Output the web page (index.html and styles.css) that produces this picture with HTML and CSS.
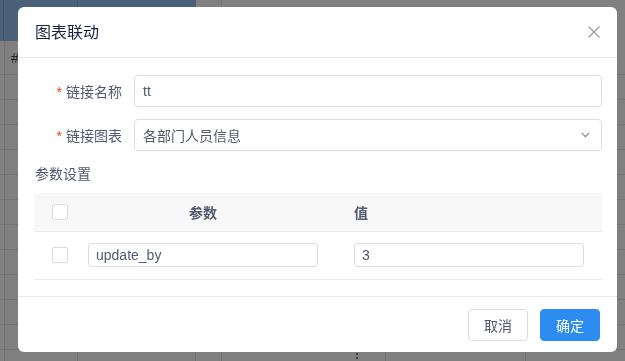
FILE: index.html
```html
<!DOCTYPE html>
<html lang="zh-CN">
<head>
<meta charset="utf-8">
<title>图表联动</title>
<link rel="stylesheet" href="styles.css">
</head>
<body>
<div class="page">
  <div class="topbar">
    <div class="brand"><span class="bcol b1"></span><span class="bcol b2"></span><span class="bcol b3"></span></div>
    <div class="tools"><span class="tcol"></span></div>
  </div>
  <div class="sheet">
    <div class="col c0"></div>
    <div class="col c1"><span class="hash">#</span></div>
    <div class="col c2"></div>
    <div class="col c3"></div>
    <div class="col c4"><span class="dots"></span></div>
    <div class="col c5"></div>
    <div class="col c6"></div>
  </div>
</div>

<div class="modal">
  <div class="modal-header">
    <span class="modal-title">图表联动</span>
    <svg class="close" width="12" height="12" viewBox="0 0 12 12"><path d="M0.5 0.5 L11.5 11.5 M11.5 0.5 L0.5 11.5" stroke="#999" stroke-width="1.2" fill="none"/></svg>
  </div>
  <div class="modal-body">
    <div class="form-item">
      <label class="form-label"><span class="req">*</span><span>链接名称</span></label>
      <div class="input">tt</div>
    </div>
    <div class="form-item">
      <label class="form-label"><span class="req">*</span><span>链接图表</span></label>
      <div class="input select">
        <span>各部门人员信息</span>
        <svg class="arrow" width="9" height="6" viewBox="0 0 9 6"><path d="M0.7 0.8 L4.5 4.6 L8.3 0.8" stroke="#808695" stroke-width="1.2" fill="none"/></svg>
      </div>
    </div>
    <div class="section-title">参数设置</div>
    <div class="table">
      <div class="trow thead">
        <div class="cell ck"><span class="checkbox"></span></div>
        <div class="cell param center">参数</div>
        <div class="cell value">值</div>
      </div>
      <div class="trow tbody">
        <div class="cell ck"><span class="checkbox"></span></div>
        <div class="cell param"><div class="small-input">update_by</div></div>
        <div class="cell value"><div class="small-input">3</div></div>
      </div>
    </div>
  </div>
  <div class="modal-footer">
    <button class="btn">取消</button>
    <button class="btn primary">确定</button>
  </div>
</div>
</body>
</html>
```
FILE: styles.css
```css
* { box-sizing: border-box; }
html, body { margin: 0; padding: 0; }
body {
  width: 625px;
  height: 361px;
  overflow: hidden;
  background: #808080;
  font-family: "Liberation Sans", "Noto Sans CJK SC", sans-serif;
  font-size: 14px;
  color: #515a6e;
}

/* dimmed page underneath */
.page {
  display: flex;
  flex-direction: column;
  height: 361px;
}
.topbar {
  display: flex;
  height: 41px;
}
.brand {
  width: 196px;
  background: #4a5f78;
  display: flex;
}
.bcol { display: block; height: 100%; border-right: 1px solid #425568; }
.b1 { width: 4px; }
.b2 { width: 74px; }
.b3 { flex: 1; border-right: none; }
.tools {
  flex: 1;
  display: flex;
}
.tcol { width: 26px; border-right: 1px solid #747474; }

.sheet {
  flex: 1;
  display: flex;
  background-image: repeating-linear-gradient(to bottom, transparent 0, transparent 24px, #747474 24px, #747474 25px);
  background-position: 0 9px;
}
.col { border-right: 1px solid #747474; height: 100%; position: relative; }
.c0 { width: 5px; }
.c1 { width: 73px; }
.c2 { width: 118px; }
.c3 { width: 26px; }
.c4 { width: 164px; }
.c5 { width: 140px; }
.c6 { flex: 1; border-right: none; }
.hash {
  display: block;
  margin: 9px 0 0 6px;
  font-size: 14px;
  line-height: 16px;
  color: #222;
}
.dots {
  position: absolute;
  right: 27px;
  bottom: 2px;
  width: 2px;
  height: 6px;
  background: repeating-linear-gradient(to bottom, #2f4a2f 0, #2f4a2f 2px, transparent 2px, transparent 4px);
}

/* modal */
.modal {
  position: fixed;
  left: 18px;
  top: 7px;
  width: 599px;
  background: #fff;
  border-radius: 6px;
  overflow: hidden;
}
.modal-header {
  height: 51px;
  border-bottom: 1px solid #e8eaec;
  padding: 0 17px 2px 17px;
  display: flex;
  align-items: center;
  justify-content: space-between;
}
.modal-title {
  font-family: "Noto Sans CJK SC", sans-serif;
  font-size: 16px;
  line-height: 20px;
  color: #17233d;
}
.close { display: block; margin-top: 1px; }

.modal-body {
  height: 238px;
  padding: 17px 15px 0 16px;
}
.form-item {
  display: flex;
  height: 32px;
  margin-bottom: 12px;
}
.form-label {
  width: 100px;
  height: 32px;
  padding-right: 12px;
  display: flex;
  align-items: center;
  justify-content: flex-end;
  font-family: "Noto Sans CJK SC", sans-serif;
  font-size: 14px;
  line-height: 20px;
  color: #515a6e;
}
.req {
  color: #ed4014;
  margin-right: 4px;
  font-family: "Liberation Sans", sans-serif;
  line-height: 14px;
  padding-top: 2px;
}
.input {
  flex: 1;
  height: 32px;
  border: 1px solid #dcdee2;
  border-radius: 4px;
  padding: 0 8px;
  line-height: 30px;
  font-size: 14px;
  color: #515a6e;
}
.select {
  display: flex;
  align-items: center;
  justify-content: space-between;
  font-family: "Noto Sans CJK SC", sans-serif;
  line-height: 20px;
}
.arrow { display: block; margin-right: 3px; }

.section-title {
  padding-left: 1px;
  height: 20px;
  line-height: 20px;
  font-family: "Noto Sans CJK SC", sans-serif;
  font-size: 14px;
  color: #515a6e;
}
.table { margin-top: 10px; }
.trow {
  display: grid;
  grid-template-columns: 54px 230px 1fr;
  align-items: center;
  border-bottom: 1px solid #e8eaec;
}
.thead {
  height: 39px;
  background: #f8f8f9;
  font-family: "Noto Sans CJK SC", sans-serif;
  font-weight: bold;
  line-height: 20px;
  color: #515a6e;
}
.tbody { height: 48px; }
.cell.ck { padding-left: 18px; display: flex; align-items: center; }
.cell.center { text-align: center; }
.cell.value { padding-left: 36px; }
.checkbox {
  display: block;
  width: 16px;
  height: 16px;
  border: 1px solid #dcdee2;
  border-radius: 2px;
  background: #fff;
}
.tbody .checkbox { margin-top: -1px; }
.small-input {
  width: 230px;
  height: 24px;
  border: 1px solid #dcdee2;
  border-radius: 3px;
  padding: 0 7px;
  line-height: 22px;
  font-size: 14px;
  color: #515a6e;
}
.tbody .small-input { margin-top: -2px; }

.modal-footer {
  height: 56px;
  border-top: 1px solid #e8eaec;
  padding: 12px 17px 0 0;
  display: flex;
  justify-content: flex-end;
  gap: 12px;
}
.btn {
  width: 60px;
  height: 32px;
  border: 1px solid #dcdee2;
  border-radius: 4px;
  background: #fff;
  color: #515a6e;
  font-family: "Noto Sans CJK SC", sans-serif;
  font-size: 14px;
  line-height: 20px;
  padding: 0;
}
.btn.primary {
  background: #2d8cf0;
  border-color: #2d8cf0;
  color: #fff;
}
```
